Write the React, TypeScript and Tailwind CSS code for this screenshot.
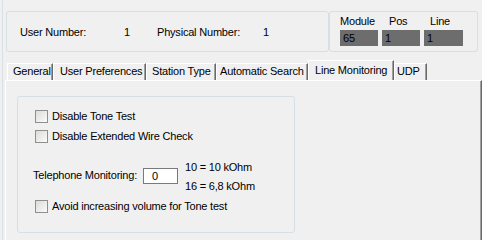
import React from "react"

//------------------------------------------------------------

const tabs = [
  { label: "General", width: "w-[46px]", pad: "pl-[5px]" },
  { label: "User Preferences", width: "w-[93px]", pad: "pl-[6px]" },
  { label: "Station Type", width: "w-[70px]", pad: "pl-[5px]" },
  { label: "Automatic Search", width: "w-[92px]", pad: "pl-[3px]" },
  { label: "Line Monitoring", width: "w-[86px]", pad: "pl-[6px]", active: true },
  { label: "UDP", width: "w-[33px]", pad: "pl-[2px]" },
]

const Checkbox = ({ label }: { label: string }) => (
  <div className="ml-[2px] flex h-[13px] items-center">
    <div className="h-[13px] w-[13px] shrink-0 border border-[#8e8f8f] bg-gradient-to-br from-[#dcdcd7] to-[#fbfbfb]" />
    <span className="ml-[4px] leading-[13px]">{label}</span>
  </div>
)

const GrayField = ({ value, width }: { value: string; width: string }) => (
  <div className={`h-[16px] ${width} bg-[#6d6d6d] pl-[3px] leading-[16px]`}>
    {value}
  </div>
)

const App = () => {
  return (
    <div className="h-[240px] w-[482px] overflow-hidden whitespace-nowrap bg-[#f0f0f0] pl-[2px] font-['Liberation_Sans',Arial,sans-serif] text-[11px] tracking-[-0.2px] text-black">
      <div className="flex h-full flex-col border-l border-[#d8dfe6]">
        {/* HEADER */}
        <div className="ml-[3px] mt-[11px] flex h-[41px]">
          <div className="flex w-[323px] items-center rounded-[3px] border border-[#d5dfe5] pl-[13px] pt-[1px]">
            <span className="w-[104px]">User Number:</span>
            <span className="w-[33px]">1</span>
            <span className="w-[106px]">Physical Number:</span>
            <span>1</span>
          </div>
          <div className="w-[149px] rounded-[3px] border border-[#d5dfe5] pl-[10px] pt-[3px]">
            <div className="flex leading-[13px]">
              <span className="w-[49px]">Module</span>
              <span className="w-[41px]">Pos</span>
              <span>Line</span>
            </div>
            <div className="mt-[2px] flex gap-[4px]">
              <GrayField value="65" width="w-[38px]" />
              <GrayField value="1" width="w-[38px]" />
              <GrayField value="1" width="w-[39px]" />
            </div>
          </div>
        </div>

        {/* TABS */}
        <div className="ml-[2px] mt-[8px] flex h-[20px] items-end pl-[2px]">
          {tabs.map((tab) => (
            <div
              key={tab.label}
              className={`${tab.width} ${tab.pad} overflow-hidden border-l border-t border-r border-l-white border-t-white border-r-[#696969] shadow-[inset_-1px_0_0_#a0a0a0] ${
                tab.active ? "h-[20px] bg-[#f0f0f0] pt-[3px] leading-[13px]" : "h-[17px] pt-[1px] leading-[13px]"
              }`}
            >
              {tab.label}
            </div>
          ))}
        </div>

        {/* PANEL */}
        <div className="ml-[2px] w-[477px] flex-1 border-l border-r border-t border-l-white border-r-[#696969] border-t-white shadow-[inset_-1px_0_0_#a0a0a0]">
          <div className="ml-[11px] mt-[15px] h-[137px] w-[278px] rounded-[3px] border border-[#d5dfe5] pl-[15px] pt-[13px]">
            <Checkbox label="Disable Tone Test" />
            <div className="mt-[7px]">
              <Checkbox label="Disable Extended Wire Check" />
            </div>

            <div className="mt-[18px] flex items-start">
              <span className="mt-[8px] w-[110px] leading-[13px]">Telephone Monitoring:</span>
              <div className="mt-[7px] h-[16px] w-[35px] border border-[#7a7a7a] bg-white pl-[8px] leading-[14px]">
                0
              </div>
              <div className="ml-[7px] flex flex-col gap-[6px] leading-[13px]">
                <span>10 = 10 kOhm</span>
                <span>16 = 6,8 kOhm</span>
              </div>
            </div>

            <div className="mt-[7px]">
              <Checkbox label="Avoid increasing volume for Tone test" />
            </div>
          </div>
        </div>
      </div>
    </div>
  )
}

export default App
